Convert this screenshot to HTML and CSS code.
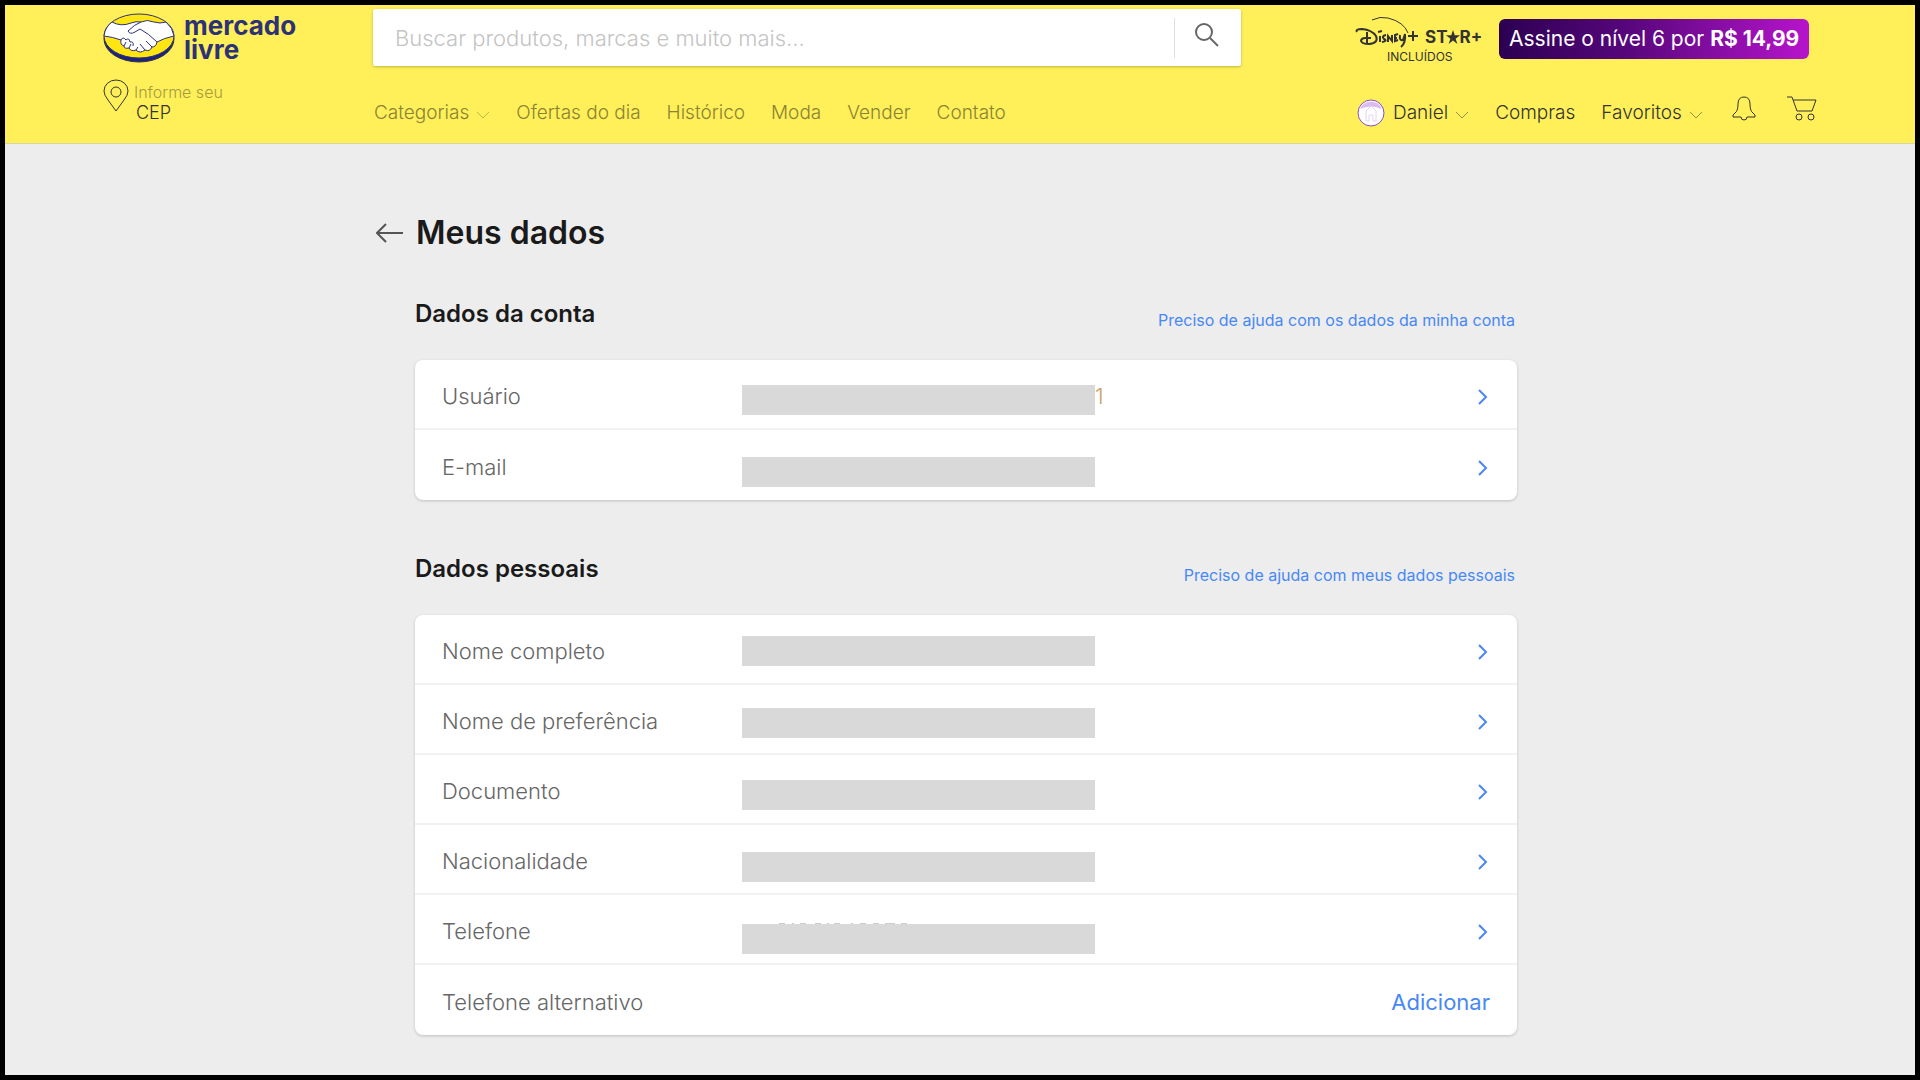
FILE: index.html
```html
<!DOCTYPE html>
<html lang="pt-BR">
<head>
<meta charset="utf-8">
<meta name="viewport" content="width=device-width, initial-scale=1">
<title>Meus dados</title>
<link rel="stylesheet" href="styles.css">
</head>
<body>
<header class="header">
  <div class="header-inner">
    <div class="brand-col">
      <a class="brand" href="#">
        <svg class="brand-mark" viewBox="0 0 72 50" aria-hidden="true">
          <ellipse cx="36" cy="26" rx="35" ry="23" fill="#1c2480"/>
          <ellipse cx="36" cy="23" rx="35" ry="22" fill="#ffe512" stroke="#2d3277" stroke-width="1"/>
          <path d="M9 9Q18 14 28 10Q33 8 38 9Q44 6 51 9Q57 11 63 9Q70 15 71 23Q61 25 54 29Q53 34 49 34Q47 39 42 37Q37 41 33 37Q28 39 26 35Q21 36 21 33Q17 32 18 27Q10 24 1 23Q2 14 9 9Z" fill="#fff" stroke="#2d3277" stroke-width="1"/>
          <path d="M38 9Q32 11 25 18Q27 22 32 19L37 16Q45 20 54 29M49 34L43 28M42 37L37 31M33 37L35 34M18 27Q20 23 23 27Q26 24 27 29Q31 28 30 33M21 33L23 29M26 35L28 31" fill="none" stroke="#2d3277" stroke-width="1"/>
        </svg>
        <span class="brand-name"><span>mercado</span><span>livre</span></span>
      </a>
      <a class="postal" href="#">
        <svg class="pin" viewBox="0 0 26 34" aria-hidden="true"><path d="M13 32L5 21Q1 16 1 12A12 11 0 0 1 25 12Q25 16 21 21Z"/><circle cx="13" cy="13" r="5"/></svg>
        <span class="postal-text"><span class="postal-hint">Informe seu</span><span class="postal-code">CEP</span></span>
      </a>
    </div>
    <div class="search-col">
      <form class="search">
        <input class="search-input" type="text" aria-label="Buscar" placeholder="Buscar produtos, marcas e muito mais...">
        <button class="search-button" type="button" aria-label="Buscar"><svg class="search-icon" viewBox="0 0 24 24" aria-hidden="true"><circle cx="9" cy="9" r="8"/><path d="M15 15L23 23"/></svg></button>
      </form>
      <nav class="nav">
        <a href="#">Categorias<svg class="caret" viewBox="0 0 14 8" aria-hidden="true"><path d="M1 1L7 7L13 1"/></svg></a>
        <a href="#">Ofertas do dia</a>
        <a href="#">Histórico</a>
        <a href="#">Moda</a>
        <a href="#">Vender</a>
        <a href="#">Contato</a>
      </nav>
    </div>
    <div class="user-col">
      <a class="promo" href="#">
        <span class="partners">
          <span class="partner-logos">
            <svg class="disney" viewBox="0 0 64 36" aria-label="Disney+" role="img">
              <path class="arc" d="M17 7Q25 3 33 5Q49 9 53 20"/>
              <path class="script" d="M2 19Q0 16 7 16Q17 17 21 23Q24 30 14 31Q7 31 6 28Q6 24 16 25M12 19V30M25 23V29M23 19L27 18M31 22Q26 23 29 26Q33 28 27 29M33 29V23L37 28V22M43 21L40 22V28L43 27M40 25H42M45 22Q44 28 48 27L50 21Q51 30 46 34"/>
              <path class="plus" d="M58 18V28M53 23H63"/>
            </svg>
            <span class="star">ST<svg class="star-shape" viewBox="0 0 16 16" aria-hidden="true"><path d="M8 0L10 6H16L11 10L13 16L8 12L3 16L5 10L0 6H6Z"/></svg>R+</span>
          </span>
          <span class="included">INCLUÍDOS</span>
        </span>
        <span class="promo-pill">Assine o nível 6 por <strong>R$ 14,99</strong></span>
      </a>
      <nav class="user-nav">
        <a href="#"><svg class="avatar" viewBox="0 0 28 28" aria-hidden="true"><circle cx="14" cy="14" r="13"/><path class="avatar-top" d="M3 10A12 12 0 0 1 25 10Q14 5 3 10Z"/><path class="house" d="M9 22V12L14 7L19 12V22H16V16H12V22Z"/></svg>Daniel<svg class="caret" viewBox="0 0 14 8" aria-hidden="true"><path d="M1 1L7 7L13 1"/></svg></a>
        <a href="#">Compras</a>
        <a href="#">Favoritos<svg class="caret" viewBox="0 0 14 8" aria-hidden="true"><path d="M1 1L7 7L13 1"/></svg></a>
        <span class="user-icons">
          <a href="#" aria-label="Notificações"><svg class="bell" viewBox="0 0 26 26" aria-hidden="true"><path d="M10 21H2Q1 19 4 17Q7 15 7 8Q7 1 13 1Q19 1 19 8Q19 15 22 17Q25 19 24 21H16Q16 24 13 24Q10 24 10 21Z"/></svg></a>
          <a href="#" aria-label="Carrinho"><svg class="cart" viewBox="0 0 30 26" aria-hidden="true"><path d="M0 1H5L10 15H25L29 4H6"/><circle cx="12" cy="21" r="3"/><circle cx="24" cy="21" r="3"/></svg></a>
        </span>
      </nav>
    </div>
  </div>
</header>
<main class="main">
  <div class="title-row">
    <a class="back" href="#" aria-label="Voltar"><svg class="back-icon" viewBox="0 0 28 20" aria-hidden="true"><path d="M27 10H1M10 1L1 10L10 19"/></svg></a>
    <h1 class="title">Meus dados</h1>
  </div>
  <section class="section">
    <div class="section-head">
      <h2 class="section-title">Dados da conta</h2>
      <a class="help" href="#">Preciso de ajuda com os dados da minha conta</a>
    </div>
    <div class="card">
      <a class="row" href="#"><span class="label">Usuário</span><span class="value value-tail">1</span><svg class="chevron" viewBox="0 0 10 16" aria-hidden="true"><path d="M1 1L8 8L1 15"/></svg></a>
      <a class="row" href="#"><span class="label">E-mail</span><span class="value"></span><svg class="chevron" viewBox="0 0 10 16" aria-hidden="true"><path d="M1 1L8 8L1 15"/></svg></a>
      <div class="masks masks-account" aria-hidden="true"><span class="mask"></span><span class="mask"></span></div>
    </div>
  </section>
  <section class="section">
    <div class="section-head">
      <h2 class="section-title">Dados pessoais</h2>
      <a class="help" href="#">Preciso de ajuda com meus dados pessoais</a>
    </div>
    <div class="card">
      <a class="row" href="#"><span class="label">Nome completo</span><span class="value"></span><svg class="chevron" viewBox="0 0 10 16" aria-hidden="true"><path d="M1 1L8 8L1 15"/></svg></a>
      <a class="row" href="#"><span class="label">Nome de preferência</span><span class="value"></span><svg class="chevron" viewBox="0 0 10 16" aria-hidden="true"><path d="M1 1L8 8L1 15"/></svg></a>
      <a class="row" href="#"><span class="label">Documento</span><span class="value"></span><svg class="chevron" viewBox="0 0 10 16" aria-hidden="true"><path d="M1 1L8 8L1 15"/></svg></a>
      <a class="row" href="#"><span class="label">Nacionalidade</span><span class="value"></span><svg class="chevron" viewBox="0 0 10 16" aria-hidden="true"><path d="M1 1L8 8L1 15"/></svg></a>
      <a class="row" href="#"><span class="label">Telefone</span><span class="value"></span><svg class="chevron" viewBox="0 0 10 16" aria-hidden="true"><path d="M1 1L8 8L1 15"/></svg></a>
      <div class="row"><span class="label">Telefone alternativo</span><span class="value"></span><a class="add" href="#">Adicionar</a></div>
      <div class="masks masks-personal" aria-hidden="true"><span class="mask"></span><span class="mask"></span><span class="mask"></span><span class="mask"></span><span class="mask"><svg class="mask-edge" viewBox="0 0 353 1"><path d="M37 0H43M50 0H52M58 0H64M73 0H79M85 0H87M92 0H98M109 0H111M118 0H124M131 0H137M143 0H153M159 0H165"/></svg></span></div>
    </div>
  </section>
</main>
</body>
</html>
```
FILE: styles.css
```css
* { box-sizing: border-box; }

body {
  margin: 0;
  min-height: 100vh;
  border: 5px solid #000;
  background: #ededed;
  color: #333;
  font-family: Inter, "Liberation Sans", sans-serif;
  font-weight: 300;
}

a { color: inherit; text-decoration: none; }
svg { display: block; flex: none; fill: none; stroke: currentColor; }

.header {
  background: #fff059;
  border-bottom: 1px solid #d9d5a0;
}
.header-inner {
  display: grid;
  grid-template-columns: 270px minmax(0, 868px) auto;
  max-width: 1714px;
  height: 138px;
  margin: 0 auto;
}

.brand-col { padding-top: 8px; }
.brand { display: flex; gap: 9px; }
.brand-mark { width: 72px; height: 50px; }
.brand-name {
  display: flex;
  flex-direction: column;
  padding-top: 1px;
  color: #2d3277;
  font-size: 26px;
  font-weight: 700;
  line-height: 24px;
}
.postal { display: flex; gap: 5px; padding-top: 16px; }
.pin { width: 26px; height: 34px; }
.postal-text { display: flex; flex-direction: column; padding-top: 1px; }
.postal-hint { color: #a59b3d; font-size: 16px; line-height: 24px; }
.postal-code { padding-left: 2px; font-size: 18px; line-height: 18px; }

.search-col { padding-top: 4px; }
.search {
  display: flex;
  align-items: center;
  height: 57px;
  border-radius: 2px;
  background: #fff;
  box-shadow: 0 1px 3px rgba(0, 0, 0, .25);
}
.search-input {
  flex: 1;
  min-width: 0;
  padding: 0 22px;
  border: 0;
  outline: 0;
  background: none;
  font: inherit;
  font-size: 22px;
}
.search-input::placeholder { color: #c4c4c4; opacity: 1; }
.search-button {
  width: 67px;
  height: 40px;
  padding: 0 0 6px 20px;
  border: 0;
  border-left: 1px solid #e0e0e0;
  background: none;
  color: #666;
}
.search-icon { width: 24px; height: 24px; stroke-width: 2; }
.nav {
  display: flex;
  gap: 26px;
  padding: 35px 0 0 1px;
  color: #8a8233;
  font-size: 19px;
  line-height: 24px;
  white-space: nowrap;
}
.nav a, .user-nav a { display: flex; align-items: center; }
.caret { width: 14px; height: 8px; margin: 4px 0 0 7px; opacity: .5; }

.user-col { padding: 8px 0 0 114px; }
.promo { display: flex; gap: 16px; }
.partners { width: 128px; }
.partner-logos { display: flex; align-items: flex-start; gap: 6px; height: 34px; }
.disney { width: 64px; height: 36px; stroke: #333; }
.arc { stroke-width: 1; }
.script, .plus { stroke-width: 2; }
.star { display: flex; align-items: center; padding-top: 14px; font-size: 17px; font-weight: 700; line-height: 20px; }
.star-shape { width: 14px; height: 14px; margin: 0 -1px; fill: #333; stroke: none; }
.included { display: block; padding-left: 32px; font-size: 12px; font-weight: 400; line-height: 20px; }
.promo-pill {
  height: 40px;
  margin-top: 6px;
  padding: 0 10px;
  border-radius: 6px;
  background: linear-gradient(90deg, #2c0052, #55067a 40%, #b714cc);
  color: #fff;
  font-size: 21px;
  font-weight: 400;
  line-height: 40px;
  white-space: nowrap;
}
.user-nav { display: flex; align-items: center; gap: 26px; padding: 29px 0 0 2px; font-size: 19px; line-height: 24px; }
.avatar { width: 28px; height: 28px; margin-right: 8px; fill: #fff; stroke: #8a4fc0; }
.avatar-top { fill: #dcbcf0; stroke: none; }
.house { stroke: #e4d4f2; }
.user-icons { display: flex; gap: 30px; padding: 0 0 8px 2px; }
.bell { width: 26px; height: 26px; }
.cart { width: 30px; height: 26px; }

.main { max-width: 1114px; margin: 0 auto; padding: 65px 0 39px 12px; }
.title-row { display: flex; align-items: center; gap: 12px; margin-left: -39px; }
.back-icon { width: 28px; height: 20px; color: #555; stroke-width: 2; }
.title { margin: 0; color: #1a1a1a; font-size: 32px; font-weight: 600; line-height: 48px; }
.section { padding-top: 39px; }
.section + .section { padding-top: 51px; }
.section-head { display: flex; justify-content: space-between; height: 64px; padding-right: 2px; }
.section-title { margin: 0; color: #1a1a1a; font-size: 24px; font-weight: 600; line-height: 36px; }
.help { padding-top: 12px; color: #4788f5; font-size: 16px; font-weight: 400; line-height: 24px; }
.card { position: relative; border-radius: 8px; background: #fff; box-shadow: 0 1px 3px rgba(0, 0, 0, .2); }
.row { display: flex; align-items: center; height: 70px; padding: 4px 27px 0; border-bottom: 2px solid #f2f2f2; font-size: 22px; }
.row:nth-last-child(2) { border-bottom: 0; }
.label { flex: 0 0 300px; color: #666; }
.value { flex: 1; }
.value-tail { padding-left: 353px; color: #c8a468; }
.chevron { width: 10px; height: 16px; margin: 2px 2px 0 0; color: #4788f5; stroke-width: 2; }
.add { color: #4788f5; font-weight: 400; }

.masks { position: absolute; left: 327px; display: flex; flex-direction: column; gap: 42px; width: 353px; pointer-events: none; }
.masks-account { top: 25px; }
.masks-personal { top: 21px; }
.mask { position: relative; height: 30px; background: #d9d9d9; }
.mask-edge { position: absolute; bottom: 100%; width: 353px; height: 1px; stroke: #999; }
```
